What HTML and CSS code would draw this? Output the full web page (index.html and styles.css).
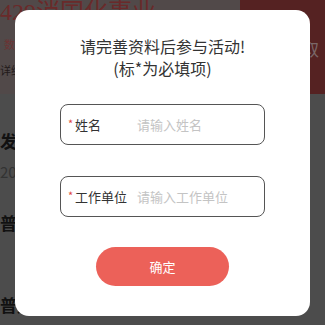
FILE: index.html
```html
<!DOCTYPE html>
<html lang="zh">
<head>
<meta charset="utf-8">
<link rel="stylesheet" href="styles.css">
</head>
<body>
<div class="page">
  <div class="banner">
    <div class="banner-left">
      <div class="banner-title">429消国化事业</div>
      <div class="banner-sub">数</div>
      <div class="banner-note">详综</div>
    </div>
    <div class="banner-right">
      <div class="banner-get">取</div>
    </div>
  </div>
  <div class="list">
    <div class="item">
      <div class="item-title">发布</div>
      <div class="item-date">2023</div>
    </div>
    <div class="item">
      <div class="item-title">普通</div>
    </div>
    <div class="item last">
      <div class="item-title">普通</div>
    </div>
  </div>
</div>
<div class="mask">
  <div class="dialog">
    <div class="dialog-title">请完善资料后参与活动!<br>(标*为必填项)</div>
    <div class="field">
      <span class="star">*</span><span class="label">姓名</span>
      <span class="placeholder">请输入姓名</span>
    </div>
    <div class="field">
      <span class="star">*</span><span class="label">工作单位</span>
      <span class="placeholder">请输入工作单位</span>
    </div>
    <div class="btn">确定</div>
  </div>
</div>
</body>
</html>
```
FILE: styles.css
```css
html, body {
  margin: 0;
  padding: 0;
}
body {
  width: 325px;
  height: 325px;
  overflow: hidden;
  position: relative;
  font-family: "Noto Sans CJK SC", "Noto Sans", sans-serif;
  background: #4c4c4c;
}
.page {
  width: 325px;
}
.banner {
  display: flex;
  height: 94px;
}
.banner-left {
  flex: 1;
  background: #514949;
  overflow: hidden;
}
.banner-right {
  width: 85px;
  background: #552222;
  display: flex;
  justify-content: flex-end;
}
.banner-title {
  font-size: 24px;
  line-height: 24px;
  color: #6a2a2a;
  white-space: nowrap;
  font-family: "Liberation Serif", "Noto Sans CJK SC", serif;
}
.banner-sub {
  font-size: 11px;
  color: #6b3434;
  margin: 12px 0 0 4px;
  white-space: nowrap;
}
.banner-note {
  font-size: 11px;
  color: #221a1a;
  margin: 10px 0 0 0;
  white-space: nowrap;
}
.banner-get {
  font-size: 17px;
  color: #7a6868;
  margin: 36px 6px 0 0;
}
.list {
  padding-top: 34px;
}
.item {
  height: 82px;
}
.item.last {
  height: auto;
}
.item-title {
  font-size: 17px;
  font-weight: bold;
  color: #111;
  white-space: nowrap;
}
.item-date {
  font-size: 15px;
  color: #333;
  margin-top: 8px;
}
.mask {
  position: absolute;
  inset: 0;
}
.dialog {
  position: absolute;
  left: 15px;
  top: 10px;
  width: 295px;
  height: 306px;
  background: #fff;
  border-radius: 14px;
  display: flex;
  flex-direction: column;
  align-items: center;
  box-sizing: border-box;
  padding-top: 25px;
}
.dialog-title {
  font-size: 16px;
  line-height: 22px;
  color: #333;
  text-align: center;
}
.field {
  margin-top: 25px;
  width: 205px;
  height: 41px;
  box-sizing: border-box;
  border: 1px solid #555;
  border-radius: 8px;
  display: flex;
  align-items: center;
  padding-left: 7px;
  font-size: 13px;
  line-height: 16px;
}
.field + .field {
  margin-top: 31px;
}
.star {
  color: #e0453e;
  font-size: 11px;
  line-height: 11px;
  width: 7px;
  margin-top: -2px;
}
.label {
  color: #333;
  width: 62px;
}
.placeholder {
  color: #c4c4c4;
}
.btn {
  margin-top: 30px;
  width: 133px;
  height: 39px;
  border-radius: 20px;
  background: #ec6159;
  color: #fff;
  font-size: 13px;
  display: flex;
  align-items: center;
  justify-content: center;
}
```
